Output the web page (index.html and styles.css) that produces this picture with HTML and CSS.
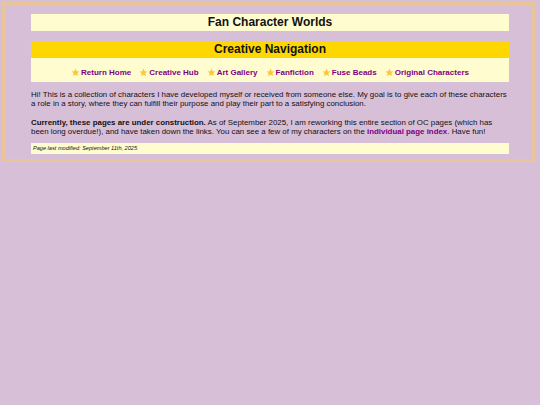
FILE: index.html
```html
<!DOCTYPE html>
<html>
<head>
<meta charset="utf-8">
<title>Fan Character Worlds</title>
<link rel="stylesheet" href="styles.css">
</head>
<body>
<div class="wrap">
  <h1 class="title">Fan Character Worlds</h1>
  <h2 class="nav-head">Creative Navigation</h2>
  <nav class="nav">
    <a class="nav-link" href="#"><svg class="star" viewBox="0 0 24 24"><path d="M12 1.5l3.2 6.9 7.3.8-5.5 5 1.6 7.3L12 17.8l-6.6 3.7 1.6-7.3-5.5-5 7.3-.8z"/></svg>Return Home</a>
    <a class="nav-link" href="#"><svg class="star" viewBox="0 0 24 24"><path d="M12 1.5l3.2 6.9 7.3.8-5.5 5 1.6 7.3L12 17.8l-6.6 3.7 1.6-7.3-5.5-5 7.3-.8z"/></svg>Creative Hub</a>
    <a class="nav-link" href="#"><svg class="star" viewBox="0 0 24 24"><path d="M12 1.5l3.2 6.9 7.3.8-5.5 5 1.6 7.3L12 17.8l-6.6 3.7 1.6-7.3-5.5-5 7.3-.8z"/></svg>Art Gallery</a>
    <a class="nav-link" href="#"><svg class="star" viewBox="0 0 24 24"><path d="M12 1.5l3.2 6.9 7.3.8-5.5 5 1.6 7.3L12 17.8l-6.6 3.7 1.6-7.3-5.5-5 7.3-.8z"/></svg>Fanfiction</a>
    <a class="nav-link" href="#"><svg class="star" viewBox="0 0 24 24"><path d="M12 1.5l3.2 6.9 7.3.8-5.5 5 1.6 7.3L12 17.8l-6.6 3.7 1.6-7.3-5.5-5 7.3-.8z"/></svg>Fuse Beads</a>
    <a class="nav-link" href="#"><svg class="star" viewBox="0 0 24 24"><path d="M12 1.5l3.2 6.9 7.3.8-5.5 5 1.6 7.3L12 17.8l-6.6 3.7 1.6-7.3-5.5-5 7.3-.8z"/></svg>Original Characters</a>
  </nav>
  <p class="text">Hi! This is a collection of characters I have developed myself or received from someone else. My goal is to give each of these characters a role in a story, where they can fulfill their purpose and play their part to a satisfying conclusion.</p>
  <p class="text second"><strong>Currently, these pages are under construction.</strong> As of September 2025, I am reworking this entire section of OC pages (which has been long overdue!), and have taken down the links. You can see a few of my characters on the <a class="inline-link" href="#">individual page index</a>. Have fun!</p>
  <footer class="footer">Page last modified: September 11th, 2025.</footer>
</div>
</body>
</html>
```

FILE: styles.css
```css
html, body {
  margin: 0;
  padding: 0;
}
body {
  background: #d8bfd8;
  font-family: "Liberation Sans", Arial, sans-serif;
  color: #111;
}
.wrap {
  margin: 2px 5px 0 2px;
  border: 3px solid #e9c69a;
  padding: 9px 23px 5px 26px;
}
.title {
  margin: 0;
  background: #fffdd0;
  text-align: center;
  font-size: 12px;
  line-height: 17px;
  font-weight: bold;
}
.nav-head {
  margin: 10px 0 0;
  background: #ffd700;
  text-align: center;
  font-size: 12px;
  line-height: 17px;
  font-weight: bold;
}
.nav {
  background: #fffdd0;
  display: flex;
  justify-content: center;
  align-items: center;
  gap: 8px;
  padding: 9px 0 5px;
  height: 10px;
}
.nav-link {
  display: flex;
  align-items: center;
  color: #800080;
  font-size: 8px;
  font-weight: bold;
  text-decoration: none;
}
.star {
  width: 9px;
  height: 9px;
  fill: #f9c93a;
  margin-right: 1px;
}
.text {
  margin: 8px 0 0;
  font-size: 7.9px;
  line-height: 9.1px;
}
.text.second {
  margin-top: 9.5px;
}
.inline-link {
  color: #800080;
  font-weight: bold;
  text-decoration: none;
}
.footer {
  margin-top: 7px;
  background: #fffdd0;
  font-size: 5.6px;
  font-style: italic;
  line-height: 11px;
  padding-left: 2px;
}
```
